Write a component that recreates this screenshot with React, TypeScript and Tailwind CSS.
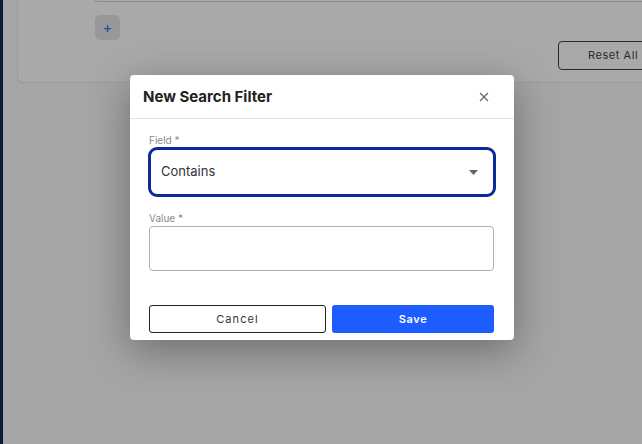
import React from "react";

export default function App() {
  return (
    <div className="relative w-[642px] h-[444px] overflow-hidden flex bg-[#a5a5a5]" style={{ fontFamily: "Inter, 'Noto Sans', sans-serif" }}>
      <div className="w-[3px] h-full bg-[#0d1838]" />
      <div className="flex-1 pl-[14px]">
        <div className="relative h-[85px] -mt-[2px] pl-[76px] border border-t-0 border-r-0 border-[#9a9a9a] rounded-bl-[6px] bg-[#a9a9a9]">
          <div className="h-[4px] border border-t-0 border-r-0 border-[#8d8d8d] rounded-bl-[5px]" />
          <div className="mt-[13px] ml-[1px] w-[25px] h-[25px] rounded-[5px] bg-[#989898] flex items-center justify-center text-[#2a4aa8] text-[15px] leading-none">+</div>
          <div className="absolute left-[540px] top-[43px] w-[110px] h-[29px] border border-[#2a2a2a] rounded-[4px] flex items-center pl-[29px] text-[11px] tracking-[0.05em] text-[#2a2a2a]">Reset All</div>
        </div>
      </div>

      <div className="absolute left-[130px] top-[75px] w-[384px] h-[265px] bg-white rounded-[4px] shadow-[0_10px_40px_rgba(0,0,0,0.35)] flex flex-col">
        <div className="h-[44px] border-b border-[#e3e3e3] flex items-center justify-between pl-[13px] pr-[25px]">
          <span className="text-[15px] font-bold text-[#222] pt-[1px]">New Search Filter</span>
          <svg width="10" height="10" viewBox="0 0 10 10" className="mt-[1px]">
            <path d="M1 1L9 9M9 1L1 9" stroke="#666" strokeWidth="1.2" />
          </svg>
        </div>
        <div className="flex flex-col px-[19px] pr-[20px] pt-[15px]">
          <div className="text-[10px] leading-[12px] text-[#8a8a8a]">Field <span className="text-[#7a8cc0]">*</span></div>
          <div className="-mx-[1px] -mr-[2px] mt-[1px] h-[50px] border-[3px] border-[#0a2a9c] rounded-[9px] flex items-center justify-between pl-[10px] pr-[15px]">
            <span className="text-[13px] text-[#333]">Contains</span>
            <svg width="9" height="5" viewBox="0 0 9 5">
              <path d="M0 0H9L4.5 5Z" fill="#666" />
            </svg>
          </div>
          <div className="mt-[15px] text-[10px] leading-[12px] text-[#8a8a8a]">Value <span className="text-[#7a8cc0]">*</span></div>
          <div className="mt-[2px] h-[45px] border border-[#b0b0b0] rounded-[4px]" />
          <div className="mt-[34px] flex gap-[6px]">
            <div className="w-[177px] h-[28px] border border-[#222] rounded-[3px] flex items-center justify-center text-[11px] font-normal tracking-[0.1em] text-[#333]">Cancel</div>
            <div className="flex-1 h-[28px] bg-[#1d5cff] rounded-[3px] flex items-center justify-center text-[11px] font-semibold tracking-[0.06em] text-white">Save</div>
          </div>
        </div>
      </div>
    </div>
  );
}
